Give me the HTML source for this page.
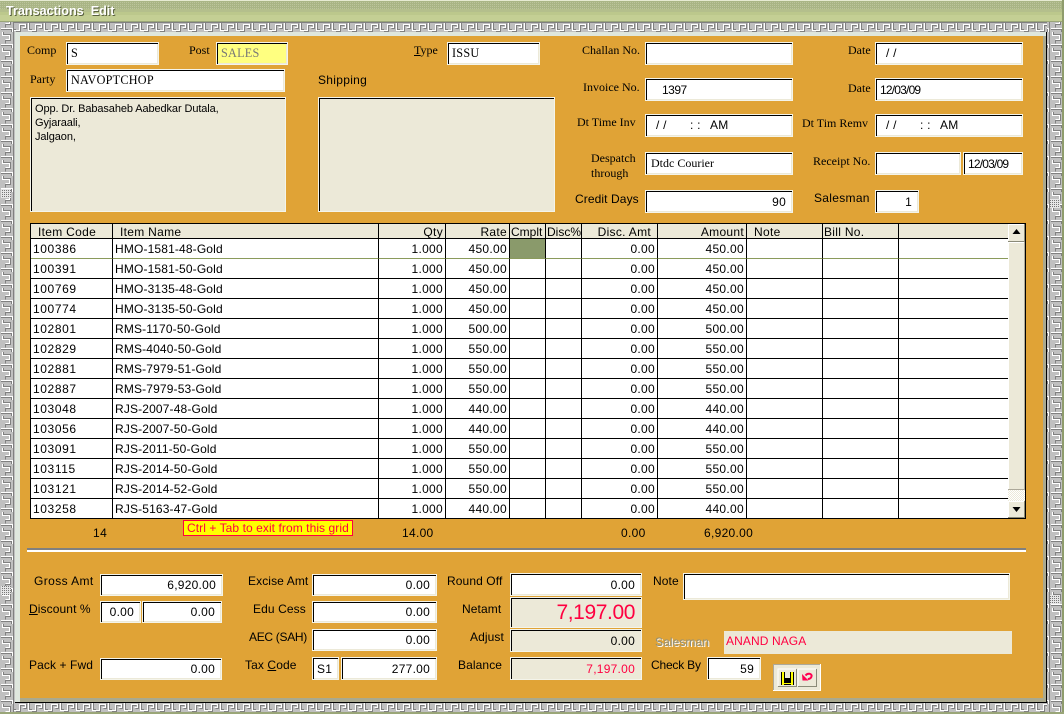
<!DOCTYPE html>
<html><head><meta charset="utf-8">
<style>
html,body{margin:0;padding:0}
body{position:relative;width:1064px;height:714px;overflow:hidden;background:#c0c0c0;font-family:"Liberation Sans",sans-serif;font-size:12px;color:#000}
.a{position:absolute}
.f{position:absolute;box-sizing:border-box;background:#fff;border:1px solid #f4f4ea;box-shadow:inset 1px 1px 0 #000,inset -1px -1px 0 #ece9d8;padding:0 6px 0 4px;white-space:pre;display:flex;align-items:center;letter-spacing:.25px}
.f span{position:absolute;top:3px;line-height:15px}
.r{justify-content:flex-end}
.g{background:#ece9d8}
.s{font-family:"Liberation Serif",serif}
.d{letter-spacing:-.8px}
.l{position:absolute;font-family:"Liberation Serif",serif;font-size:12px;line-height:14px;white-space:pre}
.n{position:absolute;font-size:12px;line-height:14px;white-space:pre;letter-spacing:.1px}
table{position:absolute;left:31px;top:224px;border-collapse:separate;border-spacing:0;table-layout:fixed;width:977px;background:#fff}
td,th{box-sizing:border-box;border-right:1px solid #000;border-bottom:1px solid #000;height:20px;padding:0 2px;font-weight:normal;font-size:12px;overflow:hidden;white-space:nowrap;letter-spacing:.15px}
td:first-child{letter-spacing:.6px}
th{height:15px;background:#ece9d8;line-height:12px;padding-top:2px;letter-spacing:.3px}
td.t{letter-spacing:.3px}
.u td{border-bottom-color:#8a9a5b}
td.e{border-right:0}
th.e{border-right:0}
.t{text-align:right}
</style></head><body>

<!-- border pattern -->
<svg class="a" style="left:0;top:0" width="1064" height="714">
<defs>
<pattern id="h" width="16" height="10" patternUnits="userSpaceOnUse" x="0" y="22">
<rect width="16" height="10" fill="#c0c0c0"/>
<path d="M0 8.5H3.5V2.5H9.5V5.5H6.5M12.5 1V8.5H16" fill="none" stroke="#fff"/>
<path d="M0 9.5H4.5V3.5H8.5M7.5 6.5H10.5V1.5M13.5 1V7.5H16M0 0.5H16" fill="none" stroke="#808080"/>
</pattern>
<pattern id="v" width="14" height="16" patternUnits="userSpaceOnUse">
<rect width="14" height="16" fill="#c0c0c0"/>
<path d="M2.5 0V3.5H9.5V7.5H5.5M1 12.5H12.5V16" fill="none" stroke="#fff"/>
<path d="M3.5 0V2.5H10.5V8.5H5.5V11.5M1 13.5H11.5V16M13.5 0V16" fill="none" stroke="#808080"/>
</pattern>
<pattern id="d" width="2" height="2" patternUnits="userSpaceOnUse">
<rect width="2" height="2" fill="#e6e6e6"/><rect width="1" height="1" fill="#777"/>
</pattern>
<pattern id="tb" width="2" height="2" patternUnits="userSpaceOnUse">
<rect width="2" height="2" fill="#a9b585"/><rect width="1" height="1" fill="#bcc49c"/>
</pattern>
<pattern id="sb" width="2" height="2" patternUnits="userSpaceOnUse">
<rect width="2" height="2" fill="#fff"/><rect width="1" height="1" fill="#ece9d8"/><rect x="1" y="1" width="1" height="1" fill="#ece9d8"/>
</pattern>
</defs>
<rect width="1064" height="714" fill="#c0c0c0"/>
<rect x="0" y="22" width="1064" height="10" fill="url(#h)"/>
<rect x="0" y="703" width="1064" height="9" fill="url(#h)"/>
<rect x="0" y="22" width="14" height="692" fill="url(#v)"/>
<rect x="1047" y="22" width="15" height="692" fill="url(#v)"/>
<rect x="1" y="189" width="10" height="9" fill="url(#d)"/>
<rect x="1" y="586" width="10" height="9" fill="url(#d)"/>
<rect x="1050" y="199" width="10" height="9" fill="url(#d)"/>
<rect x="1050" y="595" width="10" height="9" fill="url(#d)"/>
<!-- title -->
<rect width="1064" height="22" fill="url(#tb)"/>
<rect width="1064" height="1" fill="#e6ebd2"/>
<rect y="9" width="1064" height="3" fill="#b4bf8c"/>
<rect y="12" width="1064" height="9" fill="#bcc88c"/>
<rect y="15" width="1064" height="6" fill="#c4cf94"/>
<rect y="21" width="1064" height="1" fill="#9aa678"/>
<rect x="1062" y="0" width="2" height="714" fill="#8f9c6c"/>
<rect y="712" width="1064" height="2" fill="#9aa678"/>
<!-- inner frame -->
<rect x="15" y="32" width="1032" height="671" fill="#000"/>
<rect x="15" y="32" width="1031" height="670" fill="#dfe7de"/>
<rect x="20" y="36" width="1026" height="666" fill="#aaa98f"/>
<rect x="20" y="36" width="1023" height="662" fill="#e0a336"/>
<rect x="1043" y="36" width="3" height="666" fill="#aaa98f"/>
<!-- separator -->
<rect x="27" y="548" width="999" height="2" fill="#808080"/>
<rect x="27" y="550" width="999" height="2" fill="#fff"/>
</svg>

<div class="a" style="left:6px;top:4px;color:#fff;font-weight:bold;font-size:12.6px;line-height:15px;text-shadow:1px 1px 0 #59603f;white-space:pre">Transactions  Edit</div>

<!-- top labels -->
<div class="l" style="left:27px;top:43px">Comp</div>
<div class="l" style="left:189px;top:43px">Post</div>
<div class="l" style="left:30px;top:72px">Party</div>
<div class="n" style="left:318px;top:73px;letter-spacing:.3px">Shipping</div>
<div class="l" style="left:414px;top:43px"><u>T</u>ype</div>
<div class="l" style="left:582px;top:43px">Challan No.</div>
<div class="l" style="left:583px;top:80px">Invoice No.</div>
<div class="l" style="left:577px;top:115px">Dt Time Inv</div>
<div class="l" style="left:591px;top:151px">Despatch</div>
<div class="l" style="left:591px;top:166px">through</div>
<div class="n" style="left:575px;top:192px">Credit Days</div>
<div class="l" style="left:848px;top:43px">Date</div>
<div class="l" style="left:848px;top:81px">Date</div>
<div class="l" style="left:802px;top:116px">Dt Tim Remv</div>
<div class="l" style="left:813px;top:154px">Receipt No.</div>
<div class="n" style="left:814px;top:191px;letter-spacing:.3px">Salesman</div>

<!-- top fields -->
<div class="f s" style="left:66px;top:42px;width:93px;height:23px;font-size:12.2px">S</div>
<div class="f s" style="left:216px;top:42px;width:72px;height:23px;background:#ffff80;color:#777;font-size:12.2px">SALES</div>
<div class="f s" style="left:66px;top:69px;width:219px;height:23px;font-size:12.2px">NAVOPTCHOP</div>
<div class="f g" style="left:30px;top:97px;width:256px;height:115px;display:block;padding:4px 4px;line-height:14px;letter-spacing:-.1px;font-size:11px">Opp. Dr. Babasaheb Aabedkar Dutala,
Gyjaraali,
Jalgaon,</div>
<div class="f g" style="left:318px;top:97px;width:237px;height:115px"></div>
<div class="f s" style="left:447px;top:42px;width:93px;height:23px;font-size:12.2px">ISSU</div>
<div class="f" style="left:645px;top:42px;width:148px;height:23px"></div>
<div class="f" style="left:645px;top:78px;width:148px;height:23px;padding-left:16px;letter-spacing:-.5px">1397</div>
<div class="f" style="left:645px;top:114px;width:148px;height:23px"><span style="left:10px">/ /</span><span style="left:44px">: :</span><span style="left:64px">AM</span></div>
<div class="f s" style="left:645px;top:152px;width:148px;height:23px;font-size:12px;padding-left:5px;letter-spacing:0">Dtdc Courier</div>
<div class="f r" style="left:645px;top:190px;width:148px;height:23px">90</div>
<div class="f" style="left:875px;top:42px;width:148px;height:23px"><span style="left:10px">/ /</span></div>
<div class="f d" style="left:875px;top:78px;width:148px;height:23px">12/03/09</div>
<div class="f" style="left:875px;top:114px;width:148px;height:23px"><span style="left:10px">/ /</span><span style="left:44px">: :</span><span style="left:64px">AM</span></div>
<div class="f" style="left:875px;top:152px;width:86px;height:23px"></div>
<div class="f d" style="left:963px;top:152px;width:60px;height:23px">12/03/09</div>
<div class="f r" style="left:875px;top:190px;width:44px;height:23px">1</div>

<!-- grid -->
<div class="a" style="left:30px;top:223px;width:996px;height:296px;box-sizing:border-box;border:1px solid #000;background:#fff"></div>
<table>
<colgroup><col style="width:82px"><col style="width:266px"><col style="width:67px"><col style="width:64px"><col style="width:36px"><col style="width:36px"><col style="width:76px"><col style="width:89px"><col style="width:76px"><col style="width:76px"><col style="width:109px"></colgroup>
<tr><th style="padding-left:7px;text-align:left">Item Code</th><th style="padding-left:7px;text-align:left">Item Name</th><th class="t">Qty</th><th class="t">Rate</th><th style="text-align:left;padding:2px 0 0 1px;letter-spacing:0">Cmplt</th><th style="text-align:left;padding:2px 0 0 1px;letter-spacing:0">Disc%</th><th class="t" style="padding-right:6px">Disc. Amt</th><th class="t">Amount</th><th style="text-align:left;padding-left:7px">Note</th><th style="text-align:left;padding-left:1px">Bill No.</th><th class="e"></th></tr>
<tr class="u"><td>100386</td><td>HMO-1581-48-Gold</td><td class="t">1.000</td><td class="t">450.00</td><td style="background:#8a9a6b"></td><td></td><td class="t">0.00</td><td class="t">450.00</td><td></td><td></td><td class="e"></td></tr>
<tr><td>100391</td><td>HMO-1581-50-Gold</td><td class="t">1.000</td><td class="t">450.00</td><td></td><td></td><td class="t">0.00</td><td class="t">450.00</td><td></td><td></td><td class="e"></td></tr>
<tr><td>100769</td><td>HMO-3135-48-Gold</td><td class="t">1.000</td><td class="t">450.00</td><td></td><td></td><td class="t">0.00</td><td class="t">450.00</td><td></td><td></td><td class="e"></td></tr>
<tr><td>100774</td><td>HMO-3135-50-Gold</td><td class="t">1.000</td><td class="t">450.00</td><td></td><td></td><td class="t">0.00</td><td class="t">450.00</td><td></td><td></td><td class="e"></td></tr>
<tr><td>102801</td><td>RMS-1170-50-Gold</td><td class="t">1.000</td><td class="t">500.00</td><td></td><td></td><td class="t">0.00</td><td class="t">500.00</td><td></td><td></td><td class="e"></td></tr>
<tr><td>102829</td><td>RMS-4040-50-Gold</td><td class="t">1.000</td><td class="t">550.00</td><td></td><td></td><td class="t">0.00</td><td class="t">550.00</td><td></td><td></td><td class="e"></td></tr>
<tr><td>102881</td><td>RMS-7979-51-Gold</td><td class="t">1.000</td><td class="t">550.00</td><td></td><td></td><td class="t">0.00</td><td class="t">550.00</td><td></td><td></td><td class="e"></td></tr>
<tr><td>102887</td><td>RMS-7979-53-Gold</td><td class="t">1.000</td><td class="t">550.00</td><td></td><td></td><td class="t">0.00</td><td class="t">550.00</td><td></td><td></td><td class="e"></td></tr>
<tr><td>103048</td><td>RJS-2007-48-Gold</td><td class="t">1.000</td><td class="t">440.00</td><td></td><td></td><td class="t">0.00</td><td class="t">440.00</td><td></td><td></td><td class="e"></td></tr>
<tr><td>103056</td><td>RJS-2007-50-Gold</td><td class="t">1.000</td><td class="t">440.00</td><td></td><td></td><td class="t">0.00</td><td class="t">440.00</td><td></td><td></td><td class="e"></td></tr>
<tr><td>103091</td><td>RJS-2011-50-Gold</td><td class="t">1.000</td><td class="t">550.00</td><td></td><td></td><td class="t">0.00</td><td class="t">550.00</td><td></td><td></td><td class="e"></td></tr>
<tr><td>103115</td><td>RJS-2014-50-Gold</td><td class="t">1.000</td><td class="t">550.00</td><td></td><td></td><td class="t">0.00</td><td class="t">550.00</td><td></td><td></td><td class="e"></td></tr>
<tr><td>103121</td><td>RJS-2014-52-Gold</td><td class="t">1.000</td><td class="t">550.00</td><td></td><td></td><td class="t">0.00</td><td class="t">550.00</td><td></td><td></td><td class="e"></td></tr>
<tr><td>103258</td><td>RJS-5163-47-Gold</td><td class="t">1.000</td><td class="t">440.00</td><td></td><td></td><td class="t">0.00</td><td class="t">440.00</td><td></td><td></td><td class="e"></td></tr>
</table>
<!-- scrollbar -->
<svg class="a" style="left:1008px;top:224px" width="17" height="294">
<rect width="17" height="294" fill="url(#sb)"/>
<rect x="0" y="0" width="17" height="17" fill="#ece9d8"/>
<path d="M0.5 16.5V0.5H16.5" fill="none" stroke="#fff"/><path d="M0 17.5H17M16.5 0V17" stroke="#8a8a78" fill="none"/>
<path d="M8.5 5L4.5 10H12.5Z" fill="#000"/>
<rect x="0" y="18" width="17" height="248" fill="#ece9d8"/>
<path d="M0.5 265V18.5H16.5" fill="none" stroke="#fff"/><path d="M0 265.5H17M16.5 18V266" stroke="#aca899" fill="none"/>
<rect x="0" y="277" width="17" height="17" fill="#ece9d8"/>
<path d="M0.5 293V277.5H16.5" fill="none" stroke="#fff"/><path d="M0 293.5H17M16.5 277V294" stroke="#8a8a78" fill="none"/>
<path d="M4.5 283H12.5L8.5 288Z" fill="#000"/>
</svg>

<!-- totals -->
<div class="n" style="left:93px;top:526px;letter-spacing:.5px">14</div>
<div class="a" style="left:183px;top:520px;width:170px;height:16px;box-sizing:border-box;border:1px solid #ff0040;background:#ffff00;color:#ff0040;font-size:12px;line-height:14px;padding-left:3px;white-space:nowrap;letter-spacing:.07px">Ctrl + Tab to exit from this grid</div>
<div class="n" style="left:402px;top:526px;letter-spacing:.3px">14.00</div>
<div class="n" style="left:621px;top:526px;letter-spacing:.3px">0.00</div>
<div class="n" style="left:704px;top:526px;letter-spacing:.3px">6,920.00</div>

<!-- bottom labels -->
<div class="n" style="left:34px;top:574px;letter-spacing:.4px">Gross Amt</div>
<div class="n" style="left:29px;top:602px"><u>D</u>iscount %</div>
<div class="n" style="left:29px;top:658px">Pack + Fwd</div>
<div class="n" style="left:248px;top:574px">Excise Amt</div>
<div class="n" style="left:253px;top:602px">Edu Cess</div>
<div class="n" style="left:249px;top:630px;letter-spacing:-.3px">AEC (SAH)</div>
<div class="n" style="left:245px;top:658px">Tax <u>C</u>ode</div>
<div class="n" style="left:447px;top:574px">Round Off</div>
<div class="n" style="left:462px;top:602px">Netamt</div>
<div class="n" style="left:470px;top:630px">Adjust</div>
<div class="n" style="left:458px;top:658px">Balance</div>
<div class="n" style="left:653px;top:574px">Note</div>
<div class="n" style="left:655px;top:635px;color:#8f8f7a;text-shadow:1px 1px 0 #fff">Salesman</div>
<div class="n" style="left:651px;top:658px;letter-spacing:-.2px">Check By</div>

<!-- bottom fields -->
<div class="f r" style="left:100px;top:574px;width:123px;height:22px">6,920.00</div>
<div class="f r" style="left:100px;top:601px;width:41px;height:22px">0.00</div>
<div class="f r" style="left:142px;top:601px;width:80px;height:22px">0.00</div>
<div class="f r" style="left:100px;top:658px;width:122px;height:22px">0.00</div>
<div class="f r" style="left:312px;top:574px;width:125px;height:22px">0.00</div>
<div class="f r" style="left:312px;top:601px;width:125px;height:22px">0.00</div>
<div class="f r" style="left:312px;top:629px;width:125px;height:22px">0.00</div>
<div class="f" style="left:312px;top:657px;width:27px;height:23px">S1</div>
<div class="f r" style="left:341px;top:657px;width:96px;height:23px">277.00</div>
<div class="f r" style="left:510px;top:573px;width:132px;height:23px">0.00</div>
<div class="f g r" style="left:510px;top:597px;width:132px;height:31px;color:#ff0040;font-size:21px;letter-spacing:-.4px">7,197.00</div>
<div class="f g r" style="left:510px;top:629px;width:132px;height:23px">0.00</div>
<div class="f g r" style="left:510px;top:657px;width:132px;height:23px;color:#ff0040">7,197.00</div>
<div class="f" style="left:683px;top:573px;width:327px;height:27px"></div>
<div class="a" style="left:724px;top:631px;width:288px;height:23px;background:#ece9d8;color:#ff0040;line-height:20px;padding-left:2px;box-sizing:border-box;letter-spacing:.1px">ANAND NAGA</div>
<div class="f r" style="left:707px;top:657px;width:54px;height:23px">59</div>

<!-- buttons -->
<svg class="a" style="left:773px;top:664px" width="48" height="27">
<rect width="48" height="27" fill="#ece9d8"/>
<path d="M0.5 26V0.5H47.5V26" fill="none" stroke="#aca899"/>
<path d="M0 26.5H48M47.5 0V27" stroke="#fff" fill="none"/>
<path d="M5 22V5H23" fill="none" stroke="#fff"/><path d="M5 22.5H24M23.5 5V23" stroke="#8a8a78" fill="none"/>
<path d="M25 22V5H43" fill="none" stroke="#fff"/><path d="M25 22.5H44M43.5 5V23" stroke="#8a8a78" fill="none"/>
<!-- floppy -->
<rect x="8" y="8" width="13" height="13" fill="#000"/>
<rect x="9" y="8" width="2" height="13" fill="#ffff00"/>
<rect x="18" y="8" width="2" height="13" fill="#ffff00"/>
<rect x="12" y="8" width="5" height="6" fill="#ece9d8"/>
<rect x="12" y="16" width="5" height="5" fill="#000"/>
<rect x="9" y="19" width="11" height="1" fill="#ffff00"/>
<!-- undo -->
<path d="M32.5 11.5C34.5 8.8 38.8 9.5 38.6 12C38.4 14 36.5 15 34.8 15" fill="none" stroke="#ff0050" stroke-width="2"/>
<path d="M29 10L29.5 16.5H35.5Z" fill="#ff0050"/>
</svg>

</body></html>
